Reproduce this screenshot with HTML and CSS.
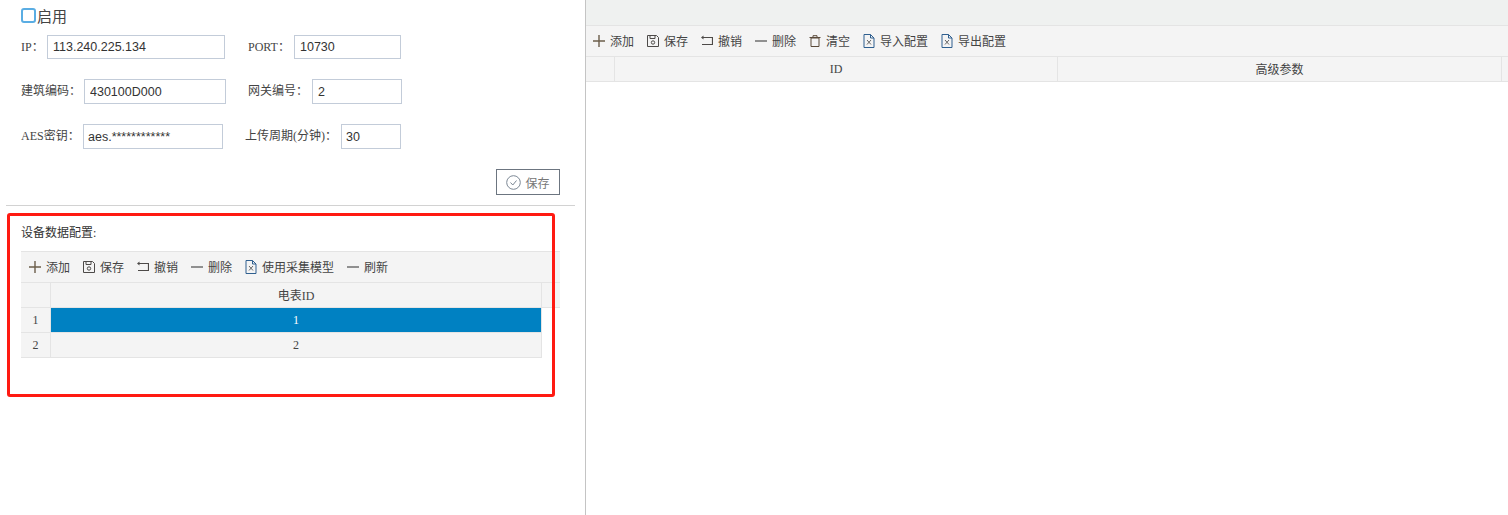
FILE: index.html
```html
<!DOCTYPE html>
<html lang="zh-CN">
  <head>
    <meta charset="utf-8">
    <title>设备配置</title>
    <link rel="stylesheet" href="styles.css">
  </head>
  <body>
    <svg class="defs" width="0" height="0">
      <symbol id="i-add" viewBox="0 0 12 12"><path d="M6 0v12M0 6h12" stroke="#6b5d4a" stroke-width="1.4" fill="none"/></symbol>
      <symbol id="i-save" viewBox="0 0 12 12"><path d="M.5.5h9l2 2v9H.5zM3 .5v3h5v-3" stroke="#4d4a48" fill="none"/><circle cx="6" cy="7.500" r="1.700" stroke="#4d4a48" fill="none"/></symbol>
      <symbol id="i-undo" viewBox="0 0 12 12"><path d="M2 2.500h9.500v7H1" stroke="#4d4a48" stroke-width="1.200" fill="none"/><path d="M0 2.500L2.500 .5v4z" fill="#4d4a48"/></symbol>
      <symbol id="i-minus" viewBox="0 0 12 12"><path d="M0 6h12" stroke="#777" stroke-width="1.600"/></symbol>
      <symbol id="i-trash" viewBox="0 0 12 12"><path d="M2 3h8v8.500H2zM.5 2.500h11M4 2.500V.7h4v1.800" stroke="#5a4a3a" fill="none"/></symbol>
      <symbol id="i-doc" viewBox="0 0 12 14"><path d="M1 .5h6.500l3.500 3.500v9.500H1zM7.500 .5V4H11" stroke="#2f5f8f" fill="none"/><path d="M4 6l4 4.500M8 6l-4 4.500" stroke="#666" fill="none"/></symbol>
    </svg>

    <div class="page">
      <div class="left_pane">
        <label class="enable_row"><span class="check"></span>启用</label>

        <div class="form_row row_one">
          <span class="lbl lbl_ip">IP：</span><input class="txt w_ip" value="113.240.225.134">
          <span class="lbl lbl_port">PORT：</span><input class="txt w_port" value="10730">
        </div>
        <div class="form_row row_two">
          <span class="lbl lbl_code">建筑编码：</span><input class="txt w_code" value="430100D000">
          <span class="lbl lbl_gate">网关编号：</span><input class="txt w_gate" value="2">
        </div>
        <div class="form_row row_three">
          <span class="lbl lbl_aes">AES密钥：</span><input class="txt w_aes" value="aes.************">
          <span class="lbl lbl_cycle">上传周期(分钟)：</span><input class="txt w_cycle" value="30">
        </div>

        <div class="save_row">
          <button class="save_btn">
            <svg width="15" height="15" viewBox="0 0 15 15"><circle cx="7.500" cy="7.500" r="6.800" stroke="#7b8794" fill="none"/><path d="M4.500 7.500l2.300 2.500 3.700-4.500" stroke="#7b8794" fill="none"/></svg>
            保存
          </button>
        </div>
        <div class="divider"></div>

        <div class="device_box">
          <p class="box_title">设备数据配置:</p>
          <div class="toolbar">
            <span class="tool"><svg><use href="#i-add"/></svg>添加</span>
            <span class="tool"><svg><use href="#i-save"/></svg>保存</span>
            <span class="tool"><svg><use href="#i-undo"/></svg>撤销</span>
            <span class="tool"><svg><use href="#i-minus"/></svg>删除</span>
            <span class="tool"><svg class="doc"><use href="#i-doc"/></svg>使用采集模型</span>
            <span class="tool"><svg><use href="#i-minus"/></svg>刷新</span>
          </div>
          <div class="grid_head left_cols">
            <div class="cell num"></div>
            <div class="cell">电表ID</div>
            <div class="cell end"></div>
          </div>
          <div class="grid_row left_body selected">
            <div class="cell num">1</div>
            <div class="cell data">1</div>
          </div>
          <div class="grid_row left_body">
            <div class="cell num">2</div>
            <div class="cell data">2</div>
          </div>
          <div class="red_frame"></div>
        </div>
      </div>

      <div class="right_pane">
        <div class="top_strip"></div>
        <div class="toolbar">
          <span class="tool"><svg><use href="#i-add"/></svg>添加</span>
          <span class="tool"><svg><use href="#i-save"/></svg>保存</span>
          <span class="tool"><svg><use href="#i-undo"/></svg>撤销</span>
          <span class="tool"><svg><use href="#i-minus"/></svg>删除</span>
          <span class="tool"><svg><use href="#i-trash"/></svg>清空</span>
          <span class="tool"><svg class="doc"><use href="#i-doc"/></svg>导入配置</span>
          <span class="tool"><svg class="doc"><use href="#i-doc"/></svg>导出配置</span>
        </div>
        <div class="grid_head right_cols">
          <div class="cell num"></div>
          <div class="cell">ID</div>
          <div class="cell">高级参数</div>
          <div class="cell end"></div>
        </div>
      </div>
    </div>
  </body>
</html>
```

FILE: styles.css
```css
* {
  box-sizing: border-box;
}

html, body {
  margin: 0;
  height: 100%;
  background: #fff;
  overflow: hidden;
}

body {
  font-family: "Liberation Serif", "Noto Sans CJK SC", serif;
  font-size: 12px;
  color: #333;
}

.defs {
  position: absolute;
}

.page {
  display: flex;
  height: 515px;
}

.left_pane {
  width: 586px;
  flex: none;
  border-right: 1px solid #c4c4c4;
  padding-top: 4px;
}

.right_pane {
  flex: 1;
  min-width: 0;
}

.top_strip {
  height: 25px;
  background: #eff1f0;
}

.right_pane .toolbar {
  padding-left: 7px;
}

/* form */
.enable_row {
  display: flex;
  align-items: center;
  height: 22px;
  margin-left: 21px;
  font-size: 15px;
  color: #444;
}

.check {
  width: 15px;
  height: 15px;
  margin-right: 1px;
  border: 2px solid #5aade3;
  border-radius: 3px;
}

.form_row {
  display: flex;
  align-items: center;
}

.row_one {
  margin-top: 9px;
  height: 24px;
}

.row_two {
  margin-top: 20px;
  height: 25px;
}

.row_three {
  margin-top: 20px;
  height: 25px;
}

.lbl {
  flex: none;
  padding-bottom: 3px;
  color: #444;
  white-space: nowrap;
}

.txt {
  flex: none;
  height: 100%;
  padding: 0 4px 0 5px;
  border: 1px solid #c3ccd9;
  border-radius: 0;
  outline: 0;
  font-family: "Liberation Sans", sans-serif;
  font-size: 12.5px;
  color: #333;
}

.lbl_ip { width: 26px; margin-left: 21px; }
.w_ip { width: 178px; }
.lbl_port { width: 46px; margin-left: 23px; }
.w_port { width: 107px; }

.lbl_code { width: 63px; margin-left: 21px; }
.w_code { width: 142px; }
.lbl_gate { width: 64px; margin-left: 22px; }
.w_gate { width: 90px; }

.lbl_aes { width: 62px; margin-left: 21px; }
.w_aes { width: 140px; padding-left: 4px; }
.lbl_cycle { width: 96px; margin-left: 22px; }
.w_cycle { width: 60px; padding-left: 4px; }

.save_row {
  display: flex;
  justify-content: flex-end;
  margin-top: 20px;
  padding-right: 25px;
}

.save_btn {
  display: flex;
  align-items: center;
  justify-content: center;
  gap: 4px;
  width: 64px;
  height: 26px;
  padding: 0;
  background: #fff;
  border: 1px solid #6c7580;
  font-family: "Noto Sans CJK SC", sans-serif;
  font-size: 12px;
  color: #777;
}

.divider {
  height: 1px;
  margin: 10px 10px 0 6px;
  background: #d2d2d2;
}

/* device box */
.device_box {
  position: relative;
  margin-top: 7px;
  padding: 11px 25px 0 21px;
  height: 184px;
}

.box_title {
  margin: 0 0 9px;
  height: 18px;
  line-height: 18px;
  font-size: 12px;
}

.red_frame {
  position: absolute;
  left: 7px;
  top: 0;
  width: 548px;
  height: 184px;
  border: 3px solid #ff1a12;
  border-radius: 3px;
  pointer-events: none;
}

/* toolbar */
.toolbar {
  display: flex;
  align-items: center;
  gap: 13px;
  height: 32px;
  padding-left: 8px;
  background: #f4f4f4;
  border-top: 1px solid #e4e4e4;
  border-bottom: 1px solid #e4e4e4;
}

.tool {
  display: flex;
  align-items: center;
  gap: 5px;
  color: #444;
  white-space: nowrap;
}

.tool svg {
  width: 12px;
  height: 12px;
  flex: none;
}

.tool svg.doc {
  height: 14px;
}

/* grids */
.grid_head, .grid_row {
  display: grid;
  height: 25px;
  background: #f4f4f4;
  border-bottom: 1px solid #e4e4e4;
}

.left_cols {
  grid-template-columns: 30px 491px 18px;
}

.left_body {
  width: 521px;
  grid-template-columns: 30px 491px;
}

.right_cols {
  grid-template-columns: 29px 443px 444px 6px;
}

.cell {
  display: flex;
  align-items: center;
  justify-content: center;
  border-right: 1px solid #e4e4e4;
  color: #444;
}

.cell.end {
  border-right: 0;
}

.selected .data {
  background: #0081c2;
  color: #fff;
}
```
